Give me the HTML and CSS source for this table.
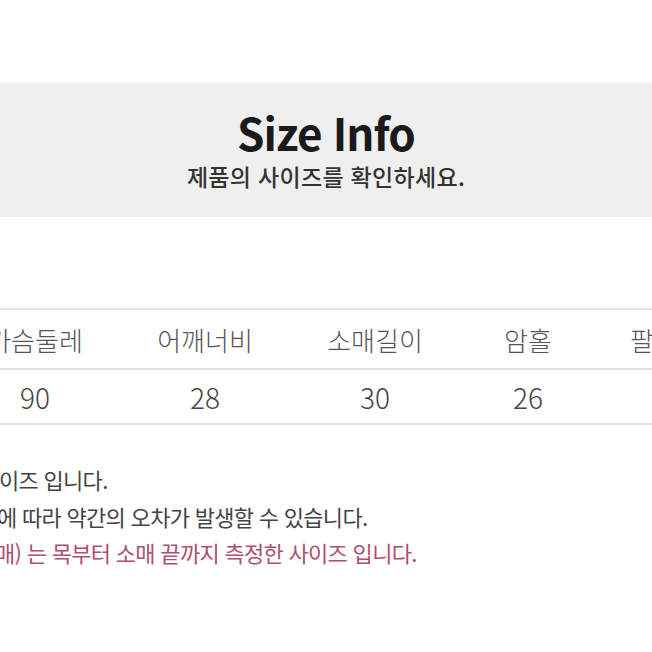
FILE: index.html
```html
<!DOCTYPE html>
<html lang="ko">
<head>
<meta charset="utf-8">
<link rel="stylesheet" href="styles.css">
</head>
<body>
<div class="page">
  <section class="band">
    <h1 class="title">Size Info</h1>
    <p class="subtitle">제품의 사이즈를 확인하세요.</p>
  </section>
  <div class="table">
    <div class="row head">
      <div class="cell">가슴둘레</div>
      <div class="cell">어깨너비</div>
      <div class="cell">소매길이</div>
      <div class="cell">암홀</div>
      <div class="cell">팔길이</div>
    </div>
    <div class="row data">
      <div class="cell">90</div>
      <div class="cell">28</div>
      <div class="cell">30</div>
      <div class="cell">26</div>
      <div class="cell"></div>
    </div>
  </div>
  <div class="notes">
    <p class="note n1">이즈 입니다.</p>
    <p class="note n2">에 따라 약간의 오차가 발생할 수 있습니다.</p>
    <p class="note n3 accent">매) 는 목부터 소매 끝까지 측정한 사이즈 입니다.</p>
  </div>
</div>
</body>
</html>
```
FILE: styles.css
```css
html, body {
  margin: 0;
  padding: 0;
  background: #ffffff;
}
body {
  width: 652px;
  height: 652px;
  overflow: hidden;
  font-family: "Noto Sans CJK KR", "Noto Sans", sans-serif;
}
.page {
  padding-top: 82px;
}
.band {
  height: 135px;
  background: #efefef;
  border-top: 2px solid #f7f7f7;
  box-sizing: border-box;
  display: flex;
  flex-direction: column;
  align-items: center;
  padding-top: 19px;
}
.title {
  margin: 0;
  font-size: 44px;
  font-weight: 700;
  line-height: 58px;
  color: #1a1a1a;
  letter-spacing: -1px;
}
.subtitle {
  margin: 0;
  font-size: 23px;
  font-weight: 500;
  line-height: 30px;
  color: #333333;
  letter-spacing: 0.3px;
}
.table {
  margin-top: 91px;
  margin-left: -50px;
  width: 790px;
  border-top: 2px solid #e4e4e4;
}
.row {
  display: grid;
  grid-template-columns: 170px 170px 170px 136px 140px;
  border-bottom: 2px solid #e4e4e4;
}
.head {
  height: 58px;
}
.data {
  height: 53px;
}
.cell {
  display: flex;
  align-items: center;
  justify-content: center;
}
.head .cell {
  font-size: 26px;
  font-weight: 300;
  color: #555555;
}
.data .cell {
  font-size: 28px;
  font-weight: 300;
  color: #444444;
}
.notes {
  margin-top: 36px;
  display: flex;
  flex-direction: column;
}
.note {
  margin: 0;
  font-size: 22px;
  line-height: 36.5px;
  color: #444444;
  letter-spacing: -0.7px;
  white-space: nowrap;
}
.n1 { margin-left: -1px; }
.n2 { margin-left: -3px; }
.n3 { margin-left: -5px; }
.accent {
  color: #ad4f6e;
}
```
